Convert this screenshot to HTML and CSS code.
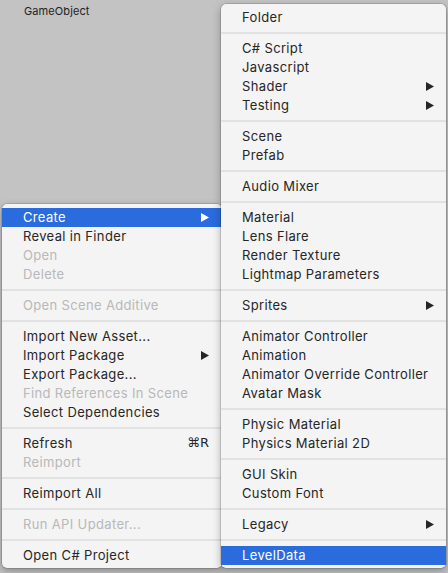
FILE: index.html
```html
<!DOCTYPE html>
<html>
<head>
<meta charset="utf-8">
<link rel="stylesheet" href="styles.css">
</head>
<body>
<div class="canvas">
  <div class="label">GameObject</div>

  <div class="menu menu-left">
    <div class="item hl"><span>Create</span><svg class="arrow" viewBox="0 0 8 9"><polygon points="0,0 8,4.5 0,9"/></svg></div>
    <div class="item"><span>Reveal in Finder</span></div>
    <div class="item off"><span>Open</span></div>
    <div class="item off"><span>Delete</span></div>
    <div class="sep"></div>
    <div class="item off"><span>Open Scene Additive</span></div>
    <div class="sep"></div>
    <div class="item"><span>Import New Asset...</span></div>
    <div class="item"><span>Import Package</span><svg class="arrow" viewBox="0 0 8 9"><polygon points="0,0 8,4.5 0,9"/></svg></div>
    <div class="item"><span>Export Package...</span></div>
    <div class="item off"><span>Find References In Scene</span></div>
    <div class="item"><span>Select Dependencies</span></div>
    <div class="sep"></div>
    <div class="item"><span>Refresh</span><span class="key">⌘R</span></div>
    <div class="item off"><span>Reimport</span></div>
    <div class="sep"></div>
    <div class="item"><span>Reimport All</span></div>
    <div class="sep"></div>
    <div class="item off"><span>Run API Updater...</span></div>
    <div class="sep"></div>
    <div class="item"><span>Open C# Project</span></div>
  </div>

  <div class="menu menu-right">
    <div class="item"><span>Folder</span></div>
    <div class="sep"></div>
    <div class="item"><span>C# Script</span></div>
    <div class="item"><span>Javascript</span></div>
    <div class="item"><span>Shader</span><svg class="arrow" viewBox="0 0 8 9"><polygon points="0,0 8,4.5 0,9"/></svg></div>
    <div class="item"><span>Testing</span><svg class="arrow" viewBox="0 0 8 9"><polygon points="0,0 8,4.5 0,9"/></svg></div>
    <div class="sep"></div>
    <div class="item"><span>Scene</span></div>
    <div class="item"><span>Prefab</span></div>
    <div class="sep"></div>
    <div class="item"><span>Audio Mixer</span></div>
    <div class="sep"></div>
    <div class="item"><span>Material</span></div>
    <div class="item"><span>Lens Flare</span></div>
    <div class="item"><span>Render Texture</span></div>
    <div class="item"><span>Lightmap Parameters</span></div>
    <div class="sep"></div>
    <div class="item"><span>Sprites</span><svg class="arrow" viewBox="0 0 8 9"><polygon points="0,0 8,4.5 0,9"/></svg></div>
    <div class="sep"></div>
    <div class="item"><span>Animator Controller</span></div>
    <div class="item"><span>Animation</span></div>
    <div class="item"><span>Animator Override Controller</span></div>
    <div class="item"><span>Avatar Mask</span></div>
    <div class="sep"></div>
    <div class="item"><span>Physic Material</span></div>
    <div class="item"><span>Physics Material 2D</span></div>
    <div class="sep"></div>
    <div class="item"><span>GUI Skin</span></div>
    <div class="item"><span>Custom Font</span></div>
    <div class="sep"></div>
    <div class="item"><span>Legacy</span><svg class="arrow" viewBox="0 0 8 9"><polygon points="0,0 8,4.5 0,9"/></svg></div>
    <div class="sep"></div>
    <div class="item hl"><span>LevelData</span></div>
  </div>
</div>
</body>
</html>
```

FILE: styles.css
```css
html, body {
  margin: 0;
  padding: 0;
}
body {
  width: 448px;
  height: 573px;
  overflow: hidden;
  background: #c3c3c3;
  font-family: Inter, "Liberation Sans", "DejaVu Sans", sans-serif;
  font-size: 13px;
  color: #262626;
}
.canvas {
  position: relative;
  width: 448px;
  height: 573px;
}
.label {
  position: absolute;
  left: 24px;
  top: 3px;
  line-height: 16px;
  font-size: 11px;
  letter-spacing: 0.1px;
  color: #222;
}
.menu {
  position: absolute;
  display: flex;
  flex-direction: column;
  box-sizing: border-box;
  padding: 4px 0 3px;
  background: #f4f4f4;
  border-radius: 5px;
  box-shadow: 0 0 0 0.5px rgba(0, 0, 0, 0.25), 0 3px 8px rgba(0, 0, 0, 0.3);
}
.menu-left {
  left: 2px;
  top: 204px;
  width: 220px;
  height: 364px;
  z-index: 1;
}
.menu-right {
  left: 221px;
  top: 4px;
  width: 225px;
  height: 564px;
  z-index: 2;
}
.item {
  box-sizing: border-box;
  height: 19px;
  display: flex;
  align-items: center;
  justify-content: space-between;
  padding: 0 12px 2px 21px;
  white-space: nowrap;
  letter-spacing: 0.35px;
}
.item.off {
  color: #b8b8b8;
}
.item.hl {
  background: #2a6bde;
  color: #fff;
}
.menu-left .item {
  padding-right: 13px;
}
.arrow {
  width: 8px;
  height: 9px;
  margin-top: 2px;
  fill: #262626;
}
.item.hl .arrow {
  fill: #fff;
}
.key {
  font-family: "DejaVu Sans", sans-serif;
  font-size: 13px;
  letter-spacing: 0;
}
.sep {
  height: 2px;
  margin: 5px 0;
  background: #e2e2e2;
}
```
